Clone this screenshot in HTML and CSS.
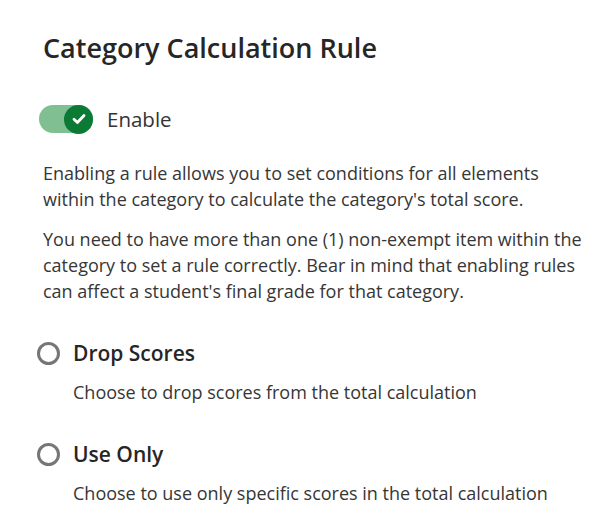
FILE: index.html
```html
<!DOCTYPE html>
<html lang="en">
<head>
<meta charset="utf-8">
<title>Category Calculation Rule</title>
<link rel="stylesheet" href="styles.css">
</head>
<body>
<main class="panel">
  <h1 class="title">Category Calculation Rule</h1>
  <div class="toggle-row">
    <span class="toggle" role="switch" aria-checked="true">
      <span class="knob">
        <svg width="14" height="12" viewBox="0 0 14 12"><path d="M2 6.2 L5.4 9.4 L12 2.6" fill="none" stroke="#fff" stroke-width="2.8" stroke-linecap="round" stroke-linejoin="round"/></svg>
      </span>
    </span>
    <span class="toggle-label">Enable</span>
  </div>
  <p class="desc">Enabling a rule allows you to set conditions for all elements within the category to calculate the category's total score.</p>
  <p class="desc second">You need to have more than one (1) non-exempt item within the category to set a rule correctly. Bear in mind that enabling rules can affect a student's final grade for that category.</p>
  <div class="options">
    <div class="option">
      <div class="option-head">
        <span class="radio"></span>
        <span class="option-title">Drop Scores</span>
      </div>
      <div class="option-desc">Choose to drop scores from the total calculation</div>
    </div>
    <div class="option">
      <div class="option-head">
        <span class="radio"></span>
        <span class="option-title">Use Only</span>
      </div>
      <div class="option-desc">Choose to use only specific scores in the total calculation</div>
    </div>
  </div>
</main>
</body>
</html>
```
FILE: styles.css
```css
html, body {
  margin: 0;
  padding: 0;
  background: #ffffff;
}
body {
  font-family: "Open Sans", "Noto Sans", sans-serif;
  color: #262626;
}
.panel {
  padding: 30px 28px 0 43px;
}
.title {
  margin: 0;
  font-size: 27px;
  font-weight: 600;
  line-height: 36px;
  color: #262626;
}
.toggle-row {
  display: flex;
  align-items: center;
  gap: 14px;
  margin-top: 39px;
  margin-left: -4px;
}
.toggle {
  display: flex;
  justify-content: flex-end;
  align-items: center;
  width: 54px;
  height: 28px;
  border-radius: 14px;
  background: #7fbf91;
}
.knob {
  width: 29px;
  height: 29px;
  border-radius: 50%;
  background: #0a7a34;
  display: flex;
  align-items: center;
  justify-content: center;
}
.toggle-label {
  font-size: 20.5px;
  color: #333333;
}
.desc {
  margin: 27px 0 0;
  font-size: 18px;
  line-height: 26px;
  color: #363636;
}
.desc.second {
  margin-top: 14px;
}
.options {
  display: flex;
  flex-direction: column;
  gap: 35px;
  margin-top: 35px;
}
.option-head {
  display: flex;
  align-items: center;
  gap: 13px;
  margin-left: -6px;
}
.radio {
  box-sizing: border-box;
  width: 23px;
  height: 23px;
  border: 3px solid #767676;
  border-radius: 50%;
}
.option-title {
  font-size: 21px;
  font-weight: 600;
  color: #262626;
  line-height: 28px;
}
.option-desc {
  margin-top: 12px;
  margin-left: 30px;
  font-size: 18px;
  line-height: 26px;
  color: #363636;
}
```
